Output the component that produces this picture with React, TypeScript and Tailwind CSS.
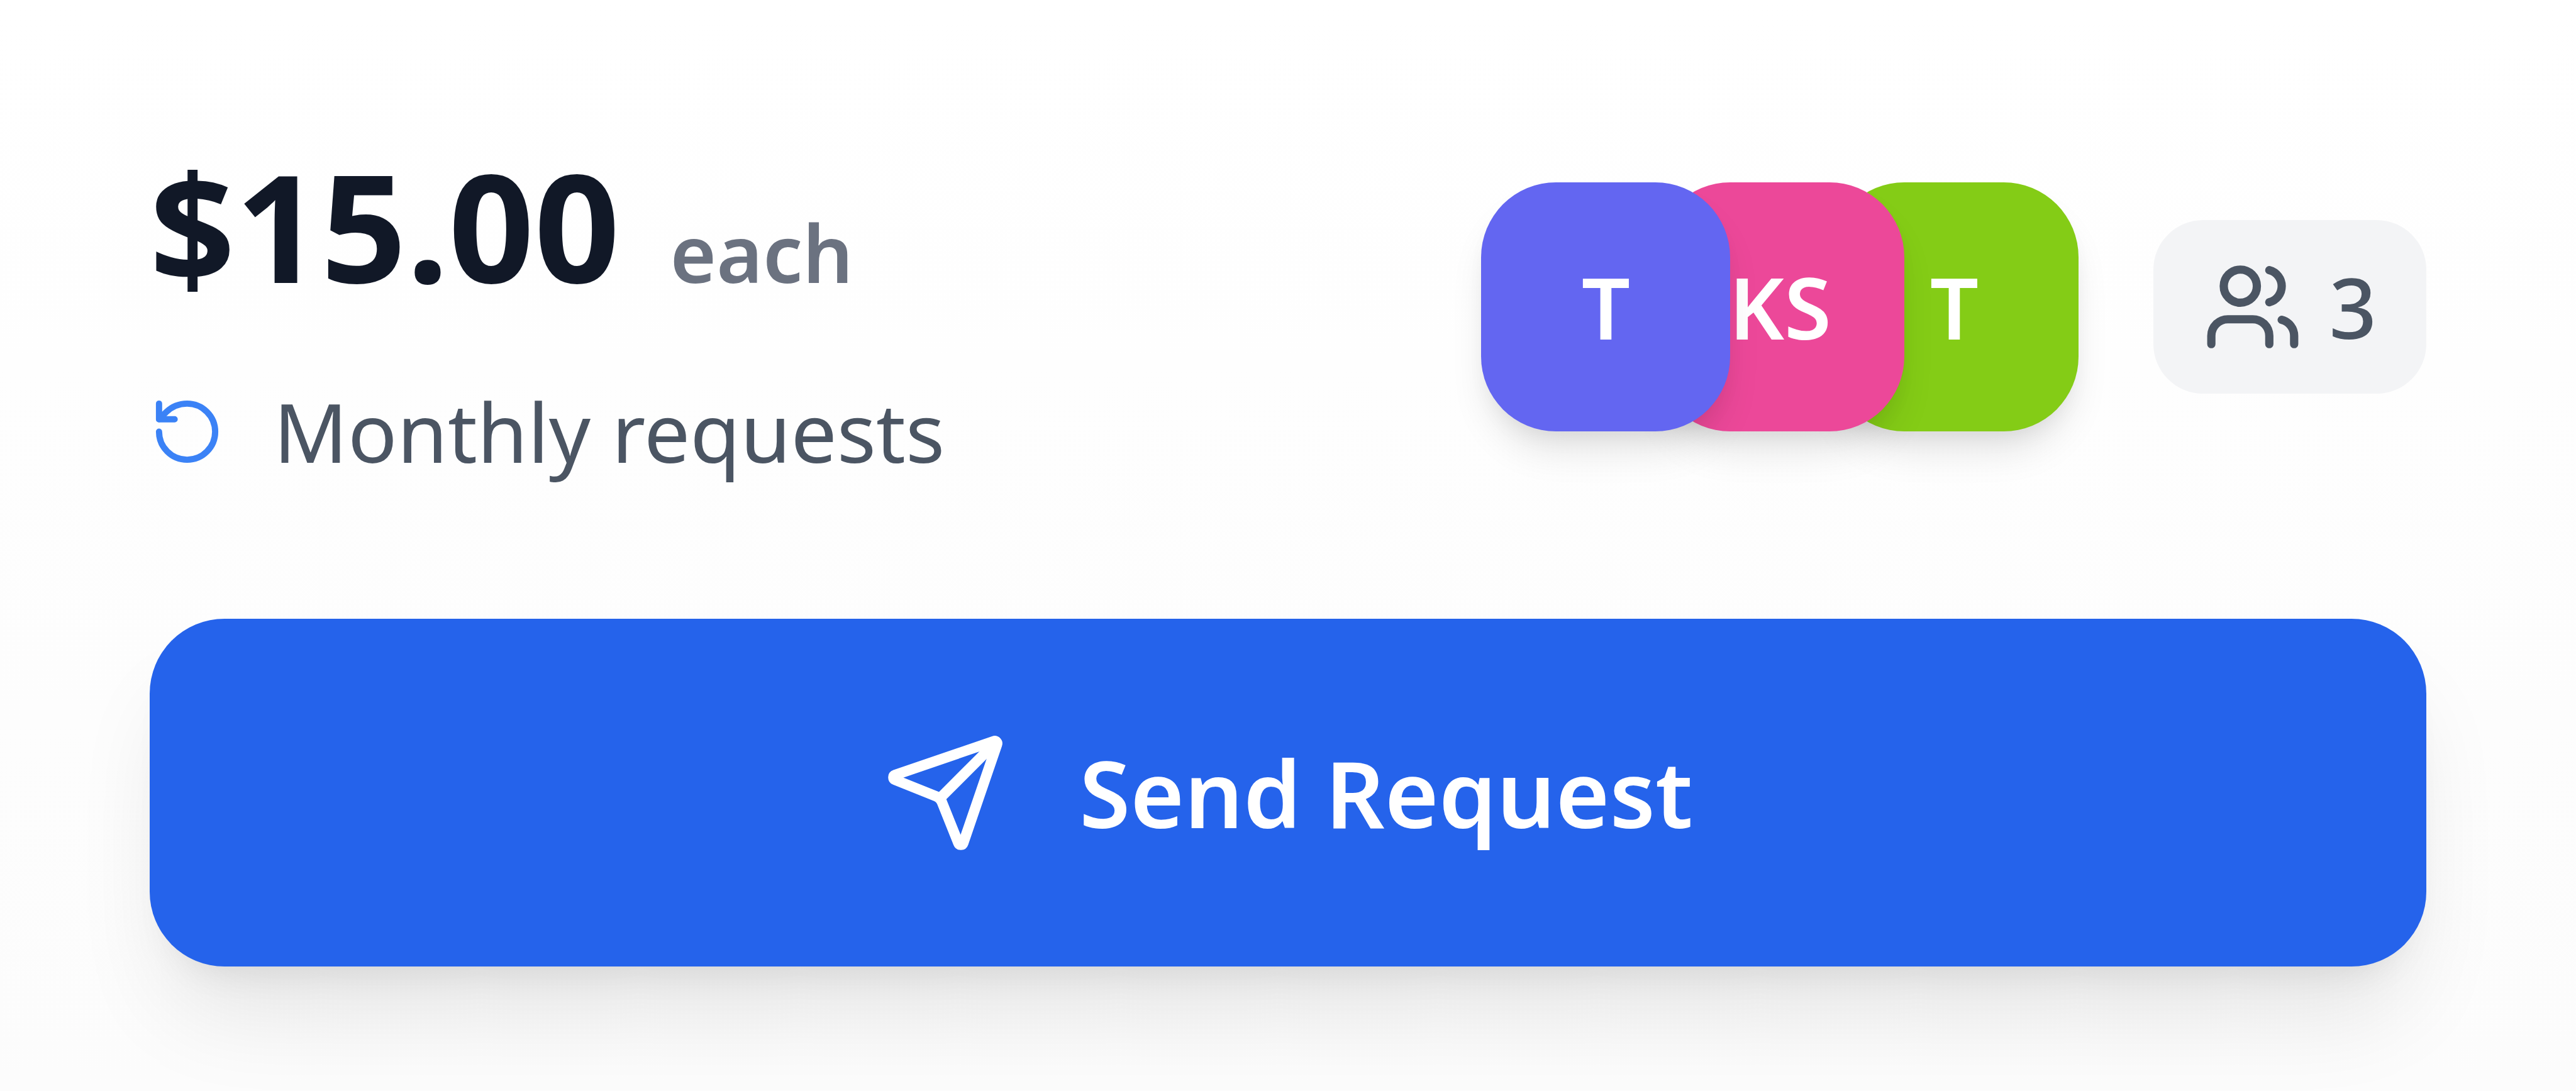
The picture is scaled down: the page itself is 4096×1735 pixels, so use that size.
import { RotateCcw, Send, Users } from "lucide-react";

const members = [
  { id: 1, initials: "T", style: "z-30 bg-[#6366f1]" },
  { id: 2, initials: "KS", style: "z-20 bg-[#ec4899]" },
  { id: 3, initials: "T", style: "z-10 bg-[#84cc16]" },
];

function Price() {
  return (
    <div>
      <div className="flex items-baseline gap-[80px]">
        <span className="text-[238px] leading-[320px] font-bold text-[#111827]">$15.00</span>
        <span className="text-[126px] leading-[200px] font-semibold text-[#6b7280]">each</span>
      </div>
      <div className="mt-[68px] flex items-center gap-[78px] text-[#4b5563]">
        <RotateCcw className="size-[119px] text-[#3b82f6]" />
        <span className="text-[130px] leading-[200px]">Monthly requests</span>
      </div>
    </div>
  );
}

function Members() {
  return (
    <div className="flex items-center gap-[119px]">
      <div className="flex -space-x-[119px]">
        {members.map((m) => (
          <div
            key={m.id}
            className={`${m.style} relative flex size-[396px] items-center justify-center rounded-[119px] text-[136px] leading-[200px] font-semibold text-white shadow-[0_40px_60px_-10px_rgba(0,0,0,0.1),0_20px_40px_-20px_rgba(0,0,0,0.1)]`}
          >
            {m.initials}
          </div>
        ))}
      </div>
      <div className="flex items-center gap-[42px] rounded-[79px] bg-[#f3f4f6] px-[79px] py-[38px] text-[132px] leading-[200px] font-medium text-[#4b5563]">
        <Users className="size-[158px]" />
        <span>3</span>
      </div>
    </div>
  );
}

export default function App() {
  return (
    <main className="min-h-screen bg-linear-to-b from-white to-[#fcfcfc] px-[238px] pt-[198px] font-['Noto_Sans',sans-serif]">
      <div className="flex items-start justify-between">
        <Price />
        <div className="pt-[92px]">
          <Members />
        </div>
      </div>
      <button
        type="button"
        className="mt-[198px] flex h-[553px] w-full items-center justify-center gap-[114px] rounded-[119px] bg-[#2563eb] text-[147px] font-semibold text-white shadow-[0_99px_149px_-30px_rgba(0,0,0,0.1),0_40px_60px_-40px_rgba(0,0,0,0.1)]"
      >
        <Send className="size-[198px]" />
        <span>Send Request</span>
      </button>
    </main>
  );
}
